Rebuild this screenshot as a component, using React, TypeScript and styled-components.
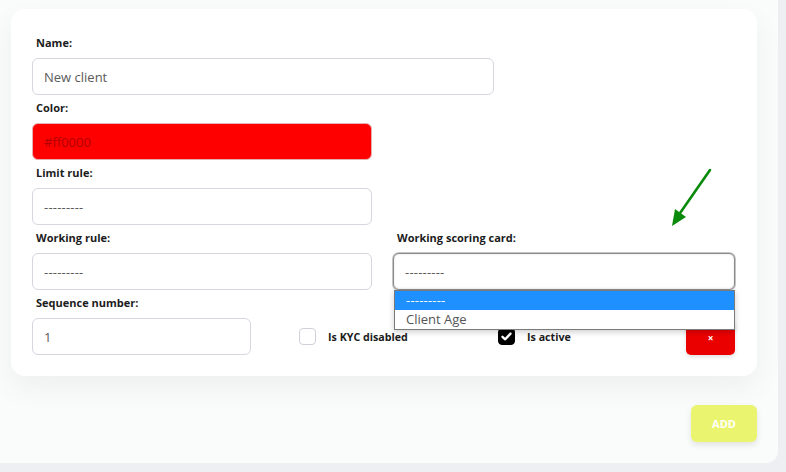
import React from "react";
import styled, { createGlobalStyle } from "styled-components";

const GlobalStyle = createGlobalStyle`
  html, body { margin: 0; padding: 0; background: #eeeff2; }
  body { font-family: "Open Sans", "Liberation Sans", sans-serif; }
  * { box-sizing: border-box; }
`;

const Page = styled.div`
  position: relative;
  width: 778px;
  height: 463px;
  background: #fafbfb;
  border-bottom-right-radius: 12px;
  padding: 9px 21px 0 11px;
  display: flex;
  flex-direction: column;
`;

const Card = styled.div`
  background: #ffffff;
  border-radius: 14px;
  box-shadow: 0 12px 30px rgba(0, 0, 0, 0.05);
  padding: 26px 21px 21px 21px;
  display: flex;
  flex-direction: column;
  gap: 5px;
`;

const Field = styled.div<{ $w: number }>`
  position: relative;
  display: flex;
  flex-direction: column;
  width: ${(p) => p.$w}px;
`;

const Label = styled.label`
  font-size: 11px;
  font-weight: 700;
  line-height: 15px;
  color: #1c1c1c;
  margin: 0 0 8px 4px;
`;

const Input = styled.div<{ $bg?: string; $color?: string }>`
  height: 37px;
  border: 1px solid #d6d6de;
  border-radius: 6px;
  background: ${(p) => p.$bg || "#fff"};
  color: ${(p) => p.$color || "#5a5a5a"};
  font-size: 13px;
  display: flex;
  align-items: center;
  padding: 0 11px;
`;

const FocusedSelect = styled(Input)`
  border: 1px solid #8c8c8c;
  box-shadow: 0 0 0 1px #c4c4c4, inset 0 0 2px rgba(0, 0, 0, 0.15);
`;

const Dashes = styled.span`
  font-size: 13px;
  letter-spacing: 0.2px;
`;

const Dropdown = styled.div`
  position: absolute;
  top: 100%;
  left: 1px;
  width: 341px;
  background: #fff;
  border: 1px solid #7a7a7a;
  box-shadow: 0 2px 6px rgba(0, 0, 0, 0.2);
  z-index: 5;
`;

const Option = styled.div<{ $sel?: boolean }>`
  height: 19px;
  line-height: 19px;
  padding-left: 11px;
  font-size: 13px;
  color: ${(p) => (p.$sel ? "#fff" : "#555")};
  background: ${(p) => (p.$sel ? "#1e90ff" : "transparent")};
`;

const Row = styled.div<{ $gap?: number }>`
  display: flex;
  align-items: flex-end;
  gap: ${(p) => p.$gap ?? 21}px;
`;

const CheckItem = styled.div<{ $w?: number }>`
  height: 37px;
  display: flex;
  align-items: center;
  gap: 12px;
  width: ${(p) => (p.$w ? `${p.$w}px` : "auto")};
  font-size: 10.7px;
  font-weight: 700;
  color: #1c1c1c;
`;

const Box = styled.span<{ $checked?: boolean }>`
  width: 17px;
  height: 17px;
  border-radius: 4px;
  border: 1px solid ${(p) => (p.$checked ? "#000" : "#cfd2da")};
  background: ${(p) => (p.$checked ? "#000" : "#fff")};
  display: flex;
  align-items: center;
  justify-content: center;
`;

const DeleteButton = styled.button`
  margin-left: auto;
  margin-right: 1px;
  width: 49px;
  height: 35px;
  border: none;
  border-radius: 5px;
  background: #eb0000;
  color: #fff;
  font-family: "Open Sans", sans-serif;
  font-weight: 700;
  font-size: 10px;
  box-shadow: 0 2px 4px rgba(0, 0, 0, 0.12);
  display: flex;
  align-items: center;
  justify-content: center;
  padding: 0;
`;

const Footer = styled.div`
  display: flex;
  justify-content: flex-end;
  margin-top: 29px;
`;

const AddButton = styled.button`
  width: 66px;
  height: 37px;
  border: none;
  border-radius: 6px;
  background: #ebf46e;
  color: #fff;
  font-family: "Open Sans", sans-serif;
  font-weight: 700;
  font-size: 11px;
  box-shadow: 0 3px 6px rgba(0, 0, 0, 0.1);
`;

const Arrow = styled.svg`
  position: absolute;
  left: 664px;
  top: 164px;
  pointer-events: none;
`;

export default function App() {
  return (
    <>
      <GlobalStyle />
      <Page>
        <Card>
          <Field $w={462}>
            <Label>Name:</Label>
            <Input>New client</Input>
          </Field>
          <Field $w={340}>
            <Label>Color:</Label>
            <Input $bg="#ff0000" $color="#b30000" style={{ borderColor: "#e6b0b0" }}>
              #ff0000
            </Input>
          </Field>
          <Field $w={340}>
            <Label>Limit rule:</Label>
            <Input>
              <Dashes>---------</Dashes>
            </Input>
          </Field>
          <Row>
            <Field $w={340}>
              <Label>Working rule:</Label>
              <Input>
                <Dashes>---------</Dashes>
              </Input>
            </Field>
            <Field $w={342}>
              <Label>Working scoring card:</Label>
              <FocusedSelect>
                <Dashes>---------</Dashes>
              </FocusedSelect>
              <Dropdown>
                <Option $sel>
                  <Dashes>---------</Dashes>
                </Option>
                <Option>Client Age</Option>
              </Dropdown>
            </Field>
          </Row>
          <Row $gap={0}>
            <Field $w={219}>
              <Label>Sequence number:</Label>
              <Input>1</Input>
            </Field>
            <CheckItem $w={199} style={{ marginLeft: 48 }}>
              <Box />
              Is KYC disabled
            </CheckItem>
            <CheckItem>
              <Box $checked>
                <svg width="11" height="9" viewBox="0 0 11 9">
                  <path d="M1.5 4.8 L4.2 7.3 L9.5 1.6" stroke="#fff" strokeWidth="2.4" fill="none" strokeLinecap="round" strokeLinejoin="round" />
                </svg>
              </Box>
              Is active
            </CheckItem>
            <DeleteButton>×</DeleteButton>
          </Row>
        </Card>
        <Footer>
          <AddButton>ADD</AddButton>
        </Footer>
        <Arrow width="56" height="66" viewBox="0 0 56 66">
          <line x1="46" y1="6" x2="14" y2="52" stroke="#0a8a0a" strokeWidth="2.6" strokeLinecap="round" />
          <polygon points="8,62 11,45 22,53" fill="#0a8a0a" />
        </Arrow>
      </Page>
    </>
  );
}
